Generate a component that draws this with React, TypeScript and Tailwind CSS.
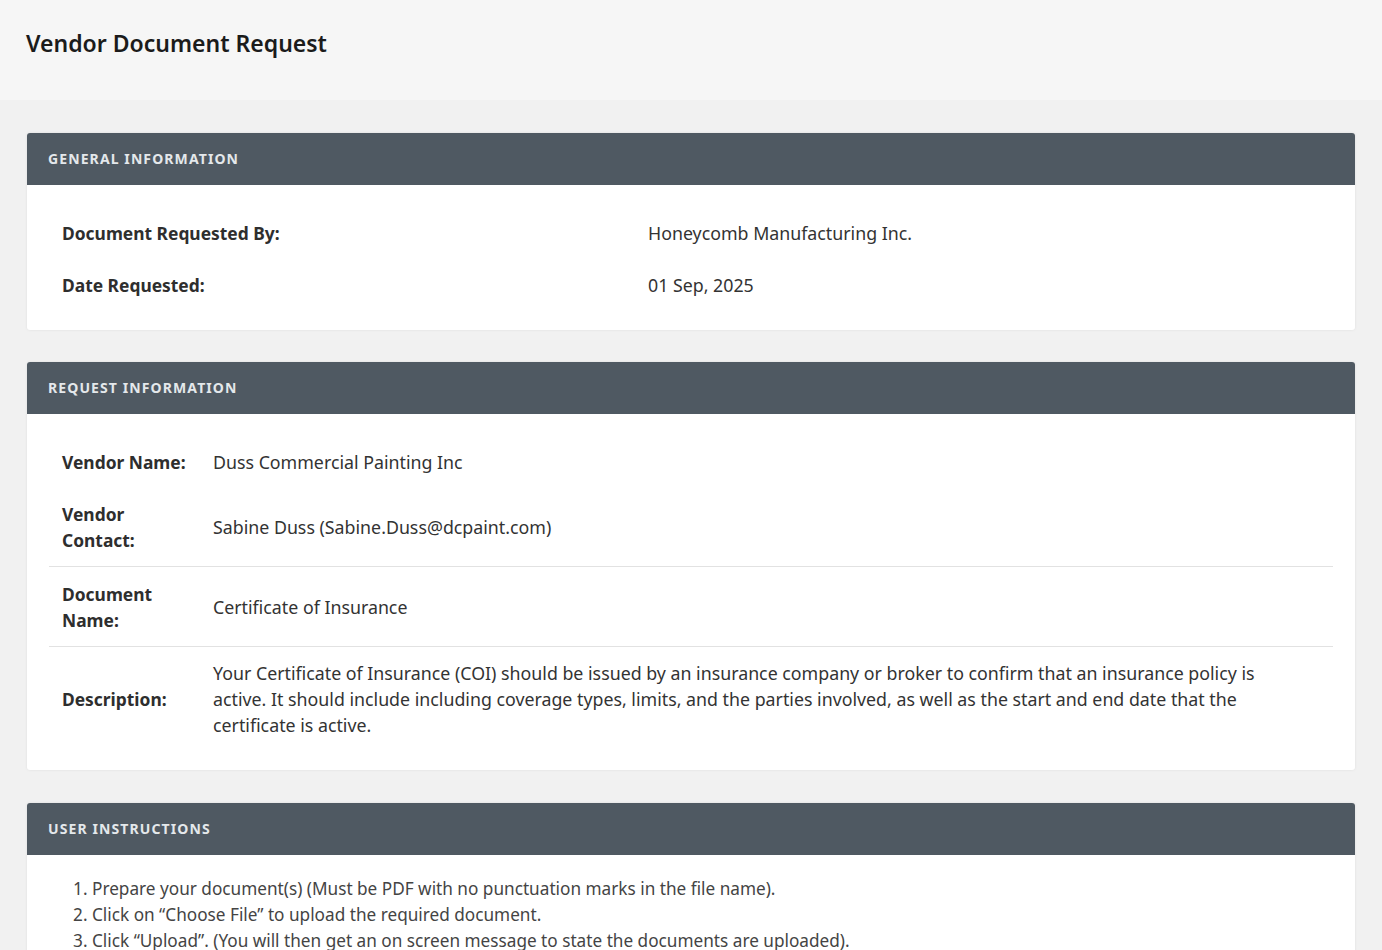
import React from "react";

function CardHeader({ title }: { title: string }) {
  return (
    <div className="h-[52px] bg-[#4f5962] rounded-t-[3px] flex items-center px-[21px]">
      <span className="text-[14px] font-bold tracking-[1.1px] text-[#e4e8eb] uppercase leading-none">
        {title}
      </span>
    </div>
  );
}

const label = "w-[151px] shrink-0 px-[13px] font-bold text-[#2e2e2e] text-[17.4px]";
const value = "flex-1 px-[13px] text-[#333] text-[17.8px]";

export default function App() {
  return (
    <div
      className="min-h-screen bg-[#f1f1f1] text-[#333]"
      style={{ fontFamily: '"Noto Sans", "Open Sans", sans-serif' }}
    >
      <div className="h-[100px] bg-[#f6f6f6] flex items-center px-[26px] pb-[13px]">
        <h1 className="text-[23px] font-semibold text-[#1b1b1b] leading-none">Vendor Document Request</h1>
      </div>

      <div className="px-[27px] pt-[33px] flex flex-col gap-[32px]">
        {/* General Information */}
        <div className="bg-white rounded-[3px] shadow-[0_0_3px_rgba(0,0,0,0.08)]">
          <CardHeader title="General Information" />
          <div className="px-[22px] pt-[22px] pb-[19px] leading-[26px]">
            <div className="flex">
              <div className="w-[586px] px-[13px] py-[13px] font-bold text-[#2e2e2e] text-[17.4px]">Document Requested By:</div>
              <div className="flex-1 px-[13px] py-[13px] text-[#333] text-[17.8px]">Honeycomb Manufacturing Inc.</div>
            </div>
            <div className="flex">
              <div className="w-[586px] px-[13px] py-[13px] font-bold text-[#2e2e2e] text-[17.4px]">Date Requested:</div>
              <div className="flex-1 px-[13px] py-[13px] text-[#333] text-[17.8px]">01 Sep, 2025</div>
            </div>
          </div>
        </div>

        {/* Request Information */}
        <div className="bg-white rounded-[3px] shadow-[0_0_3px_rgba(0,0,0,0.08)]">
          <CardHeader title="Request Information" />
          <div className="px-[22px] pt-[22px] pb-[19px] leading-[26px]">
            <div className="flex items-center py-[13px]">
              <div className={label + " whitespace-nowrap"}>Vendor Name:</div>
              <div className={value}>Duss Commercial Painting Inc</div>
            </div>
            <div className="flex items-center pt-[13px] pb-[13px] border-b border-[#e2e2e2]">
              <div className={label}>Vendor Contact:</div>
              <div className={value}>Sabine Duss (Sabine.Duss@dcpaint.com)</div>
            </div>
            <div className="flex items-center pt-[14px] pb-[13px] border-b border-[#e2e2e2]">
              <div className={label}>Document Name:</div>
              <div className={value}>Certificate of Insurance</div>
            </div>
            <div className="flex items-center pt-[13px] pb-[13px]">
              <div className={label + " whitespace-nowrap"}>Description:</div>
              <div className={value}>
                <p className="max-w-[1065px]">
                  Your Certificate of Insurance (COI) should be issued by an insurance company or broker to confirm that an insurance policy is active. It should include including coverage types, limits, and the parties involved, as well as the start and end date that the certificate is active.
                </p>
              </div>
            </div>
          </div>
        </div>

        {/* User Instructions */}
        <div className="mt-[1px] bg-white rounded-[3px] shadow-[0_0_3px_rgba(0,0,0,0.08)]">
          <CardHeader title="User Instructions" />
          <div className="px-[22px] pt-[21px] pb-[20px] text-[17.2px] leading-[26px] text-[#444]">
            <ol className="list-decimal pl-[43px]">
              <li>Prepare your document(s) (Must be PDF with no punctuation marks in the file name).</li>
              <li>Click on “Choose File” to upload the required document.</li>
              <li>Click “Upload”. (You will then get an on screen message to state the documents are uploaded).</li>
            </ol>
          </div>
        </div>
      </div>
    </div>
  );
}
